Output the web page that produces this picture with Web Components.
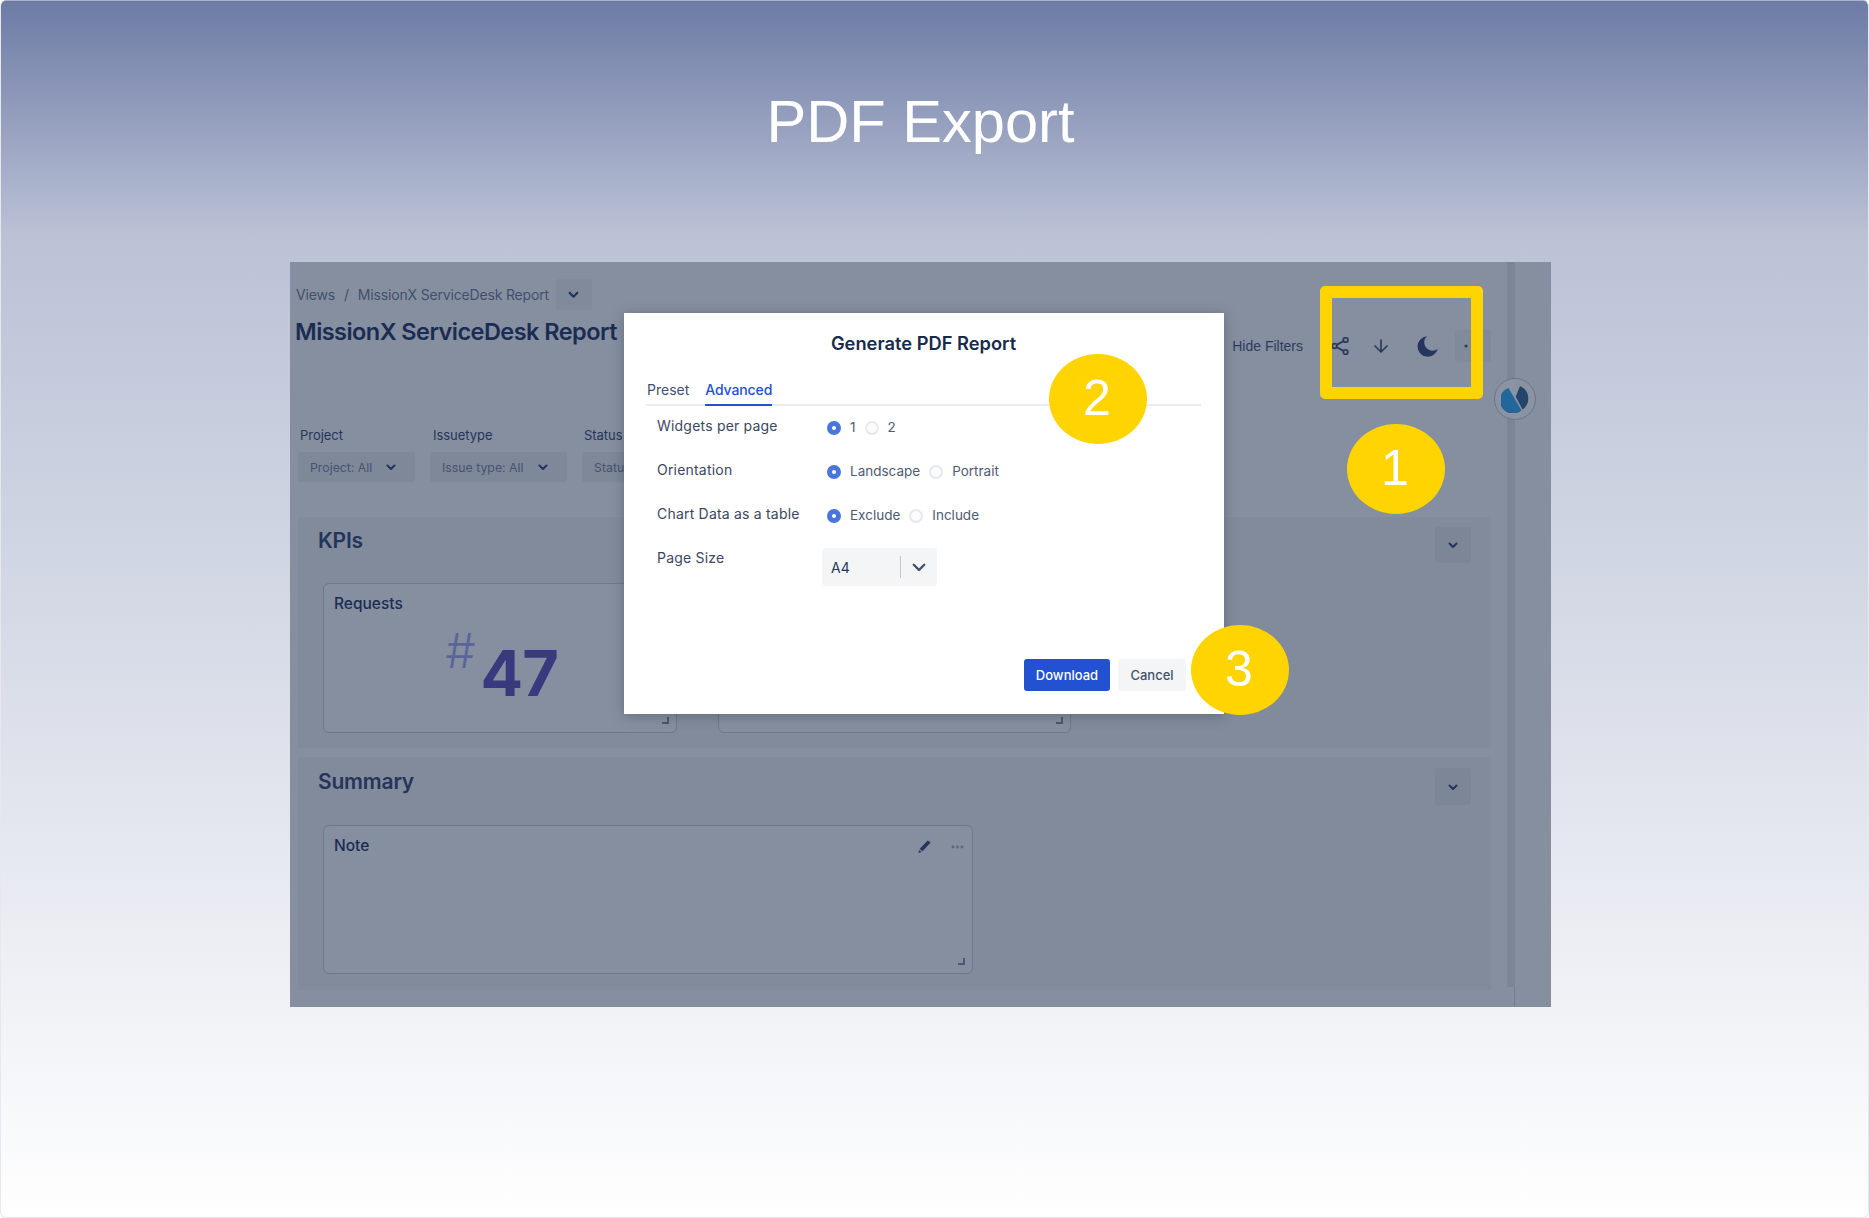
<!DOCTYPE html>
<html lang="en">
<head>
<meta charset="utf-8">
<title>PDF Export</title>
<style>
  html, body { margin: 0; padding: 0; background: #fff; }
</style>
</head>
<body>
<report-page>
  <report-view>
    <report-section slot="sections" heading="KPIs">
      <widget-card style="--card-width:354px;--card-height:150px" heading="Requests">
        <big-number value="47"></big-number>
      </widget-card>
      <widget-card style="--card-width:353px;--card-height:150px"></widget-card>
    </report-section>
    <report-section slot="sections" heading="Summary" style="--head-top:11px;--head-btn:37px;--section-height:233px">
      <widget-card style="--card-width:650px;--card-height:149px" heading="Note" tools></widget-card>
    </report-section>
    <pdf-modal slot="modal"></pdf-modal>
  </report-view>
</report-page>

<script>
const chevron = (w, sw) => `<svg width="${w}" height="${w}" viewBox="0 0 12 12" fill="none" stroke="currentColor" stroke-width="${sw}" stroke-linecap="round" stroke-linejoin="round"><path d="M2.5 4.5 6 8l3.5-3.5"/></svg>`;

/**
 * Outer slide: gradient, heading and the yellow callouts on top
 */
class ReportPage extends HTMLElement {
    constructor() {
        super();
        this.attachShadow({ mode: 'open' });
    }

    connectedCallback() {
        this.shadowRoot.innerHTML = `
      <style>
        :host {
          display: block;
          width: 1869px;
          height: 1218px;
          position: relative;
          overflow: hidden;
          font-family: Inter, "Liberation Sans", sans-serif;
        }
        .slide {
          box-sizing: border-box;
          height: 1218px;
          border: 1px solid #e6e8ee;
          border-top-color: #a9b2ca;
          border-radius: 6px;
          background: linear-gradient(180deg, #6d7ba5 0, #bbc2d6 234px, #fff 1218px);
          display: flex;
          flex-direction: column;
          align-items: flex-start;
        }
        h1 {
          align-self: stretch;
          margin: 86px 0 0;
          height: 70px;
          text-align: center;
          font: 400 59.6px/70px "Liberation Sans", sans-serif;
          color: #fff;
          padding-right: 28px;
        }
        .panel { margin: 105px 0 0 289px; }
        .frame {
          position: absolute;
          left: 1320px; top: 286px;
          width: 163px; height: 113px;
          box-sizing: border-box;
          border: 12px solid #ffd400;
          border-radius: 5px;
        }
        .mark {
          position: absolute;
          box-sizing: border-box;
          width: 98px; height: 90px;
          padding-right: 2px;
          border-radius: 50%;
          background: #ffd400;
          color: #fff;
          font: 400 50px/89px "Liberation Sans", sans-serif;
          text-align: center;
        }
      </style>
      <div class="slide">
        <h1>PDF Export</h1>
        <div class="panel"><slot></slot></div>
      </div>
      <div class="frame"></div>
      <div class="mark" style="left:1347px;top:424px">1</div>
      <div class="mark" style="left:1049px;top:354px">2</div>
      <div class="mark" style="left:1191px;top:625px">3</div>
    `;
    }
}
customElements.define('report-page', ReportPage);

/**
 * The dimmed report behind the modal
 */
class ReportView extends HTMLElement {
    constructor() {
        super();
        this.attachShadow({ mode: 'open' });
    }

    connectedCallback() {
        this.shadowRoot.innerHTML = `
      <style>
        :host {
          display: block;
          position: relative;
          width: 1261px;
          height: 745px;
          background: #868f9f;
          color: #24345a;
        }
        .wrap { box-sizing: border-box; height: 745px; padding: 17px 60px 0 6px; }
        .head { display: flex; justify-content: space-between; }
        .crumbs {
          display: flex;
          align-items: center;
          height: 31px;
          font-size: 14px;
          letter-spacing: -.17px;
          color: #414f6e;
        }
        .crumbs i { font-style: normal; margin: 0 9px 0 9px; }
        .crumbs b {
          display: flex; align-items: center; justify-content: center;
          width: 36px; height: 31px; margin-left: 7px;
          background: #818a9a; border-radius: 3px; color: #24345a;
        }
        h2 {
          margin: 7px 0 0 -1px;
          font-size: 23.5px;
          letter-spacing: -.55px;
          line-height: 30px;
          font-weight: 600;
          color: #1b2c53;
          white-space: nowrap;
        }
        .tools {
          display: flex;
          align-items: center;
          height: 32px;
          margin-top: 51px;
          font: 14px "Liberation Sans", sans-serif;
          color: #2c3b60;
        }
        .tools svg { display: block; }
        .dots {
          display: flex; align-items: center; justify-content: center;
          width: 36px; height: 32px; margin-left: 17px;
          background: #818a9a; border-radius: 3px;
        }
        .filters { display: flex; gap: 15px; margin: 64px 0 0 2px; }
        .sections { display: flex; flex-direction: column; gap: 9px; margin: 35px 0 0 2px; }
        .track {
          position: absolute;
          left: 1217px; top: 0; width: 8px; height: 725px;
          background: #7c8595;
        }
        .line {
          position: absolute;
          left: 1224px; top: 725px; width: 1px; height: 20px;
          background: #737c8d;
        }
        .logo {
          position: absolute;
          left: 1204px; top: 116px;
          width: 42px; height: 42px;
          box-sizing: border-box;
          border: 1px solid #6d7686;
          border-radius: 50%;
          background: #8a93a3;
          display: flex; align-items: center; justify-content: center;
        }
      </style>
      <div class="track"></div>
      <div class="line"></div>
      <div class="wrap">
        <div class="head">
          <div>
            <div class="crumbs">Views<i>/</i><span>MissionX ServiceDesk Report</span><b>${chevron(13, 2)}</b></div>
            <h2>MissionX ServiceDesk Report</h2>
          </div>
          <div class="tools">
            <span style="margin-right:28px">Hide Filters</span>
            <svg width="18" height="18" viewBox="0 0 18 18" fill="none" stroke="currentColor" stroke-width="1.8"><circle cx="3.5" cy="9" r="2.3"/><circle cx="14.6" cy="2.9" r="2.3"/><circle cx="14.6" cy="15.1" r="2.3"/><path d="M5.6 7.9l6.9-3.8M5.6 10.1l6.9 3.8"/></svg>
            <svg style="margin-left:25px" width="14" height="14" viewBox="0 0 14 14" fill="none" stroke="currentColor" stroke-width="1.7" stroke-linecap="round" stroke-linejoin="round"><path d="M7 1v12M1 7l6 6 6-6"/></svg>
            <svg style="margin-left:29px" width="21" height="21" viewBox="0 0 21 21" fill="#24365f"><path d="M10 .3A10.2 10.2 0 1 0 20.7 12.7 8 8 0 0 1 10 .3Z"/></svg>
            <div class="dots"><svg width="18" height="4" viewBox="0 0 18 4" fill="currentColor"><circle cx="2" cy="2" r="1.6"/><circle cx="9" cy="2" r="1.6"/><circle cx="16" cy="2" r="1.6"/></svg></div>
          </div>
        </div>
        <div class="filters">
          <filter-select label="Project" value="Project: All" style="--w:117px"></filter-select>
          <filter-select label="Issuetype" value="Issue type: All" style="--w:137px;--label-left:3px"></filter-select>
          <filter-select label="Status" value="Status: All" style="--w:120px"></filter-select>
        </div>
        <div class="sections"><slot name="sections"></slot></div>
      </div>
      <div class="logo">
        <svg width="28" height="28" viewBox="0 0 28 28"><path fill="#23669a" d="M7.5 3 20.5 25.5A13.2 13.2 0 1 1 7.5 3Z"/><path fill="#24456a" d="M19 1A13.5 13.5 0 0 1 21.5 24.5L14.7 11.7Z"/></svg>
      </div>
      <slot name="modal"></slot>
    `;
    }
}
customElements.define('report-view', ReportView);

class FilterSelect extends HTMLElement {
    constructor() {
        super();
        this.attachShadow({ mode: 'open' });
    }

    connectedCallback() {
        this.shadowRoot.innerHTML = `
      <style>
        :host { display: block; width: var(--w); font-size: 13px; }
        label { display: block; height: 18px; line-height: 18px; margin: 0 0 8px var(--label-left, 2px); color: #25355a; letter-spacing: -.03px; }
        .box {
          display: flex; align-items: center; justify-content: space-between;
          box-sizing: border-box;
          height: 30px; padding: 0 18px 0 12px;
          background: #7f8899; border-radius: 3px; color: #46536f;
          font-size: 12.3px;
          white-space: nowrap;
        }
        svg { color: #24345a; flex: none; }
      </style>
      <label>${this.getAttribute('label')}</label>
      <div class="box"><span>${this.getAttribute('value')}</span>${chevron(12, 2)}</div>
    `;
    }
}
customElements.define('filter-select', FilterSelect);

class ReportSection extends HTMLElement {
    constructor() {
        super();
        this.attachShadow({ mode: 'open' });
    }

    connectedCallback() {
        this.shadowRoot.innerHTML = `
      <style>
        :host {
          display: block;
          box-sizing: border-box;
          width: 1193px;
          height: var(--section-height, 231px);
          padding: var(--head-top, 10px) 20px 0 20px;
          background: #828b9b;
        }
        .head { display: flex; justify-content: space-between; align-items: flex-start; }
        h3 { margin: 0; font-size: 21px; letter-spacing: -.2px; line-height: 28px; font-weight: 600; color: #24345a; }
        .btn {
          display: flex; align-items: center; justify-content: center;
          width: 36px; height: var(--head-btn, 36px);
          background: #7d8697; border-radius: 3px; color: #24345a;
        }
        .cards { display: flex; gap: 41px; margin: 20px 0 0 5px; }
      </style>
      <div class="head">
        <h3>${this.getAttribute('heading')}</h3>
        <div class="btn">${chevron(12, 2)}</div>
      </div>
      <div class="cards"><slot></slot></div>
    `;
    }
}
customElements.define('report-section', ReportSection);

class WidgetCard extends HTMLElement {
    constructor() {
        super();
        this.attachShadow({ mode: 'open' });
    }

    connectedCallback() {
        const heading = this.getAttribute('heading') || '';
        const tools = this.hasAttribute('tools') ? `
        <div class="tools">
          <svg width="13" height="13" viewBox="0 0 13 13" fill="#25365e"><path d="M9.7.4 12.6 2.6 4.6 11.3 1.6 9Z"/><path d="M1.2 10 3.6 11.9.4 12.9Z"/></svg>
          <svg width="13" height="4" viewBox="0 0 13 4" fill="#5c6780"><circle cx="2" cy="2" r="1.4"/><circle cx="6.5" cy="2" r="1.4"/><circle cx="11" cy="2" r="1.4"/></svg>
        </div>` : '';
        this.shadowRoot.innerHTML = `
      <style>
        :host {
          display: block;
          position: relative;
          box-sizing: border-box;
          width: var(--card-width);
          height: var(--card-height);
          padding: 10px;
          background: #868f9f;
          border: 1px solid #6f7889;
          border-radius: 6px;
        }
        .title { font-size: 15.5px; line-height: 20px; font-weight: 500; color: #1b2c53; }
        .tools {
          position: absolute; right: 8px; top: 14px;
          display: flex; align-items: center; gap: 20px;
        }
        .grip {
          position: absolute; right: 7px; bottom: 8px;
          width: 5px; height: 5px;
          border-right: 2px solid #4b5775;
          border-bottom: 2px solid #4b5775;
        }
      </style>
      <div class="title">${heading}</div>
      ${tools}
      <slot></slot>
      <div class="grip"></div>
    `;
    }
}
customElements.define('widget-card', WidgetCard);

class BigNumber extends HTMLElement {
    constructor() {
        super();
        this.attachShadow({ mode: 'open' });
    }

    connectedCallback() {
        this.shadowRoot.innerHTML = `
      <style>
        :host { display: flex; justify-content: center; align-items: flex-start; padding: 13px 2px 0 5px; }
        .hash { font-size: 48px; line-height: 48px; font-weight: 300; color: #5a6499; margin-right: 5px; }
        .num { font-size: 63px; line-height: 76px; font-weight: 700; letter-spacing: -1px; color: #38397f; margin-top: 8px; }
      </style>
      <span class="hash">#</span><span class="num">${this.getAttribute('value')}</span>
    `;
    }
}
customElements.define('big-number', BigNumber);

class RadioRow extends HTMLElement {
    constructor() {
        super();
        this.attachShadow({ mode: 'open' });
    }

    connectedCallback() {
        const options = this.getAttribute('options').split(',');
        this.shadowRoot.innerHTML = `
      <style>
        :host {
          display: flex; align-items: center; height: 20px;
          margin: 1.5px 0 0 5px;
          font-size: 13.5px; color: #505b73;
        }
        span { position: relative; top: -.5px; }
        .dot {
          box-sizing: border-box;
          width: 14px; height: 14px; border-radius: 50%;
          border: 2px solid #e6e8ec; background: #fbfbfc;
          margin-right: 9px; flex: none;
        }
        .on { border: 5px solid #4a75dc; background: #fff; }
        span + .dot { margin-left: 9px; }
      </style>
      ${options.map((o, i) => `<div class="dot ${i === 0 ? 'on' : ''}"></div><span>${o}</span>`).join('')}
    `;
    }
}
customElements.define('radio-row', RadioRow);

/**
 * Generate PDF Report modal
 */
class PdfModal extends HTMLElement {
    constructor() {
        super();
        this.attachShadow({ mode: 'open' });
    }

    connectedCallback() {
        this.shadowRoot.innerHTML = `
      <style>
        :host {
          position: absolute;
          left: 334px; top: 51px;
          width: 600px; height: 401px;
          background: #fff;
          box-shadow: 0 2px 12px rgba(40, 50, 70, .35);
          color: #3b4760;
        }
        .box { box-sizing: border-box; height: 401px; padding: 18px 23px 23px 22px; display: flex; flex-direction: column; }
        h4 { margin: 0; text-align: center; font-size: 18.3px; line-height: 24px; font-weight: 600; color: #172b4d; }
        .tabs {
          display: flex; gap: 16px;
          margin-top: 25px;
          border-bottom: 2px solid #ebecf0;
          font-size: 14px;
        }
        .tabs div { height: 24px; line-height: 20px; margin-bottom: -2px; color: #42526e; }
        .tabs div:first-child { margin-left: 1px; }
        .tabs .active { color: #2251d1; font-weight: 500; letter-spacing: -.12px; border-bottom: 2px solid #2251d1; }
        .form {
          display: grid;
          grid-template-columns: 165px 1fr;
          grid-auto-rows: 44px;
          margin: 10px 0 0 11px;
          font-size: 14px;
          line-height: 20px;
          letter-spacing: .2px;
        }
        radio-row { letter-spacing: 0; }
        .select {
          display: flex; align-items: center;
          width: 115px; height: 38px;
          box-sizing: border-box;
          padding-left: 9px;
          background: #f4f5f7; border-radius: 4px;
          color: #253858; font-size: 14px; letter-spacing: 0;
        }
        .select span { width: 69px; position: relative; top: 1px; }
        .select i { width: 1px; height: 22px; background: #c1c7d0; margin-right: 9px; }
        .select svg { color: #42526e; }
        .foot { margin-top: auto; display: flex; justify-content: flex-end; gap: 8px; padding-right: 15px; }
        button {
          height: 32px; border: 0; border-radius: 3px;
          font: 500 13px Inter, "Liberation Sans", sans-serif;
        }
        .primary { width: 86px; background: #2251d1; color: #fff; }
        .plain { width: 68px; background: #f4f5f7; color: #42526e; }
      </style>
      <div class="box">
        <h4>Generate PDF Report</h4>
        <div class="tabs"><div>Preset</div><div class="active">Advanced</div></div>
        <div class="form">
          <div>Widgets per page</div><radio-row options="1,2"></radio-row>
          <div>Orientation</div><radio-row options="Landscape,Portrait"></radio-row>
          <div>Chart Data as a table</div><radio-row options="Exclude,Include"></radio-row>
          <div>Page Size</div>
          <div class="select"><span>A4</span><i></i>${chevron(18, 1.6)}</div>
        </div>
        <div class="foot"><button class="primary">Download</button><button class="plain">Cancel</button></div>
      </div>
    `;
    }
}
customElements.define('pdf-modal', PdfModal);
</script>
</body>
</html>
